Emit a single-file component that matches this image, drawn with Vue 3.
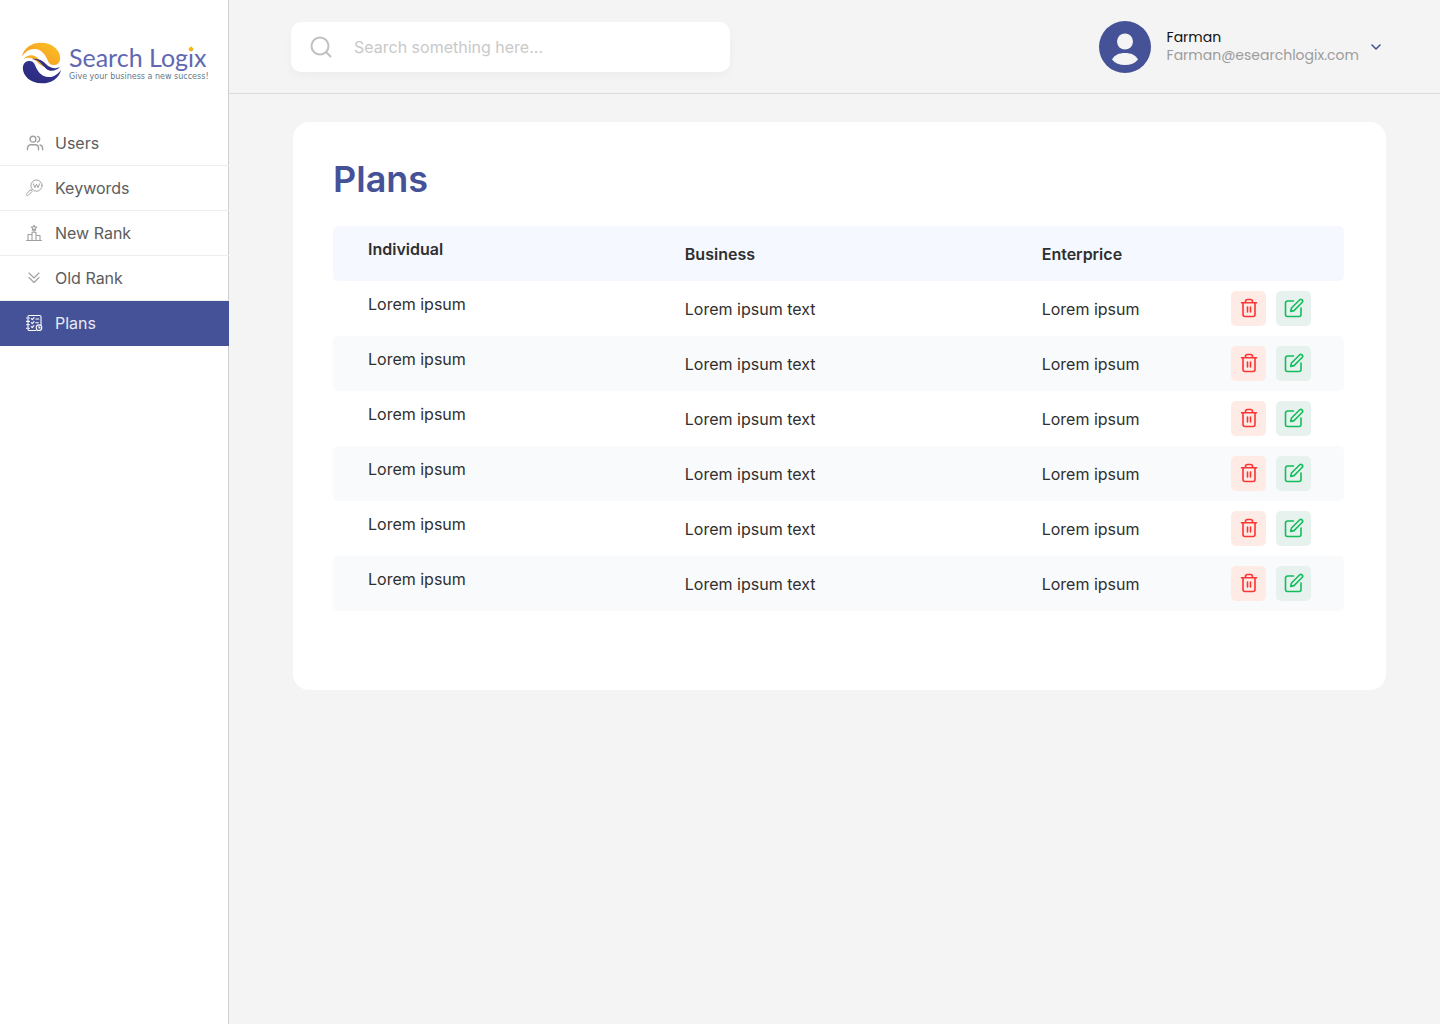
<script setup>
import { ref } from 'vue'

const query = ref('')
const active = ref('Plans')
const links = ['Users', 'Keywords', 'New Rank', 'Old Rank', 'Plans']
const plans = Array.from({ length: 6 }, (_, id) => ({
  id,
  individual: 'Lorem ipsum',
  business: 'Lorem ipsum text',
  enterprise: 'Lorem ipsum',
}))
</script>

<template>
  <div class="app">
    <aside class="sidebar">
      <a class="brand" href="#">
        <svg class="mark" viewBox="0 0 122 126" aria-hidden="true">
          <defs>
            <linearGradient id="gold" x1="0" y1="1" x2="1" y2="0">
              <stop offset="0" stop-color="#f39325" />
              <stop offset="1" stop-color="#fcc323" />
            </linearGradient>
            <linearGradient id="navy" x1="0" y1="1" x2="1" y2="0">
              <stop offset="0" stop-color="#3a3a9c" />
              <stop offset="1" stop-color="#28287a" />
            </linearGradient>
          </defs>
          <g fill="url(#gold)">
            <path d="M2 43C9 16 32 2 60 2c34 0 57 22 57 45 0 13-7 21-17 22-10 1-14-2-18-9C74 42 66 24 42 21 24 19 11 31 2 43Z" />
            <path d="M5 52c12-13 30-17 42-6 15 13 20 27 43 29-19 3-32-4-43-16C35 47 22 44 5 52Z" />
          </g>
          <g fill="url(#navy)" transform="rotate(180 61 63)">
            <path d="M2 43C9 16 32 2 60 2c34 0 57 22 57 45 0 13-7 21-17 22-10 1-14-2-18-9C74 42 66 24 42 21 24 19 11 31 2 43Z" />
            <path d="M5 52c12-13 30-17 42-6 15 13 20 27 43 29-19 3-32-4-43-16C35 47 22 44 5 52Z" />
          </g>
        </svg>
        <span class="wordmark">
          <span class="name">Search Log<span class="dotted">i</span>x</span>
          <span class="tagline">Give your business a new success!</span>
        </span>
      </a>

      <nav class="nav">
        <a
          v-for="link in links"
          :key="link"
          href="#"
          class="nav-link"
          :class="{ active: link === active }"
          @click.prevent="active = link"
        >
          <svg class="nav-icon" viewBox="0 0 18 18" aria-hidden="true">
            <g v-if="link === 'Users'" stroke-width="1.4">
              <circle cx="7" cy="5.2" r="2.9" />
              <path d="M1.5 15.8v-1.6a3.4 3.4 0 0 1 3.4-3.4h4.2a3.4 3.4 0 0 1 3.4 3.4v1.6M11.6 2.4a2.9 2.9 0 0 1 0 5.6M14 10.9a3.4 3.4 0 0 1 2.6 3.3v1.6" />
            </g>
            <g v-else-if="link === 'Keywords'" stroke-width="1">
              <circle cx="10.5" cy="6.6" r="5.6" />
              <path d="m7.4 4.8 1.6 3.8 1.5-3.4L12 8.6l1.6-3.800M6.300 10.400l-.9.9M4.700 10.900l1.500 1.500-4 4a1 1 0 0 1-1.500-1.500z" />
            </g>
            <g v-else-if="link === 'New Rank'" stroke-width="1.1">
              <path d="M.5 16.500h15M2 16.500v-6h4M6 16.500V8.300h4v8.200M10 11.500h4v5M8 8.300V6.500M8 1.200l.8 1.700 1.900.2-1.400 1.300.4 1.900-1.700-.9-1.700.9.4-1.900-1.400-1.300 1.900-.2z" />
            </g>
            <g v-else-if="link === 'Old Rank'" stroke-width="1.1">
              <path d="m3 4 5 5 5-5M3 8.500l5 5 5-5" />
            </g>
            <g v-else stroke-width="1.1">
              <path d="M10 16.500H3.300A1.300 1.300 0 0 1 2 15.200M2 2.800a1.300 1.300 0 0 1 1.300-1.300h10.400A1.300 1.300 0 0 1 15 2.800v7.700M.5 4h3M.5 7.400h3M.5 10.800h3M.5 14.200h3M2 5v1.500M2 8.400v1.500M2 11.800v1.500M5.300 4.600l1 1 1.700-2M5.300 8.600l1 1 1.700-2M5.300 12.700l1 1 1.500-2M9.800 5h3M9.800 8.800h2.500" />
              <circle cx="13" cy="13.7" r="2.8" />
              <path d="M13 12.2v1.7h1.2" />
            </g>
          </svg>
          {{ link }}
        </a>
      </nav>
    </aside>

    <div class="main">
      <header class="topbar">
        <label class="search">
          <svg class="search-icon" viewBox="0 0 22 22" aria-hidden="true">
            <circle cx="10" cy="10" r="8.5" />
            <path d="m16 16 4.5 4.5" />
          </svg>
          <input v-model="query" type="search" placeholder="Search something here..." aria-label="Search" />
        </label>

        <button class="account" type="button">
          <svg class="avatar" viewBox="0 0 52 52" aria-hidden="true">
            <circle cx="26" cy="26" r="26" fill="#465298" />
            <circle cx="26" cy="20.5" r="8" fill="#f4f4f4" />
            <path d="M13 38.5C15.5 34 20 32 26 32s10.5 2 13 6.5C36 42.3 31.5 44 26 44s-10-1.7-13-5.5Z" fill="#f4f4f4" />
          </svg>
          <span class="identity">
            <span class="user">Farman</span>
            <span class="email">Farman@esearchlogix.com</span>
          </span>
          <svg class="chevron" viewBox="0 0 10 8" aria-hidden="true"><path d="m1 2 4 4 4-4" /></svg>
        </button>
      </header>

      <main class="card">
        <h1>Plans</h1>
        <table>
          <colgroup>
            <col class="col-individual" />
            <col class="col-business" />
            <col class="col-enterprise" />
            <col />
          </colgroup>
          <thead>
            <tr>
              <th scope="col">Individual</th>
              <th scope="col">Business</th>
              <th scope="col">Enterprice</th>
              <td></td>
            </tr>
          </thead>
          <tbody>
            <tr v-for="plan in plans" :key="plan.id">
              <td>{{ plan.individual }}</td>
              <td>{{ plan.business }}</td>
              <td>{{ plan.enterprise }}</td>
              <td>
                <div class="actions">
                  <button class="action delete" type="button" aria-label="Delete plan">
                    <svg viewBox="0 0 21 21" aria-hidden="true">
                      <path d="M3.500 4.700h15M5 4.700v11.800a2 2 0 0 0 2 2h8a2 2 0 0 0 2-2V4.700M7.500 4.700V3.500a2 2 0 0 1 2-2h3a2 2 0 0 1 2 2v1.200M9.500 9v5M12.500 9v5" />
                    </svg>
                  </button>
                  <button class="action edit" type="button" aria-label="Edit plan">
                    <svg viewBox="0 0 21 21" aria-hidden="true">
                      <path d="M10.5 3h-6a2 2 0 0 0-2 2v11.5a2 2 0 0 0 2 2H16a2 2 0 0 0 2-2V10M16.5 2a1.7 1.7 0 0 1 2.6 2.500L11 12.600l-3.300.8.8-3.400z" />
                    </svg>
                  </button>
                </div>
              </td>
            </tr>
          </tbody>
        </table>
      </main>
    </div>
  </div>
</template>

<style>
body {
  margin: 0;
  background: #f4f4f4;
}
</style>

<style scoped>
.app {
  display: flex;
  min-height: 100vh;
  background: #f4f4f4;
  color: #2f2f2f;
  font-family: Inter, "Liberation Sans", sans-serif;
  font-size: 16px;
}

.app * {
  box-sizing: border-box;
}

a {
  color: inherit;
  text-decoration: none;
}

button {
  padding: 0;
  border: 0;
  background: none;
  color: inherit;
  font: inherit;
  text-align: left;
  cursor: pointer;
}

svg {
  display: block;
  flex: none;
  fill: none;
  stroke-linecap: round;
  stroke-linejoin: round;
}

.sidebar {
  flex: none;
  width: 229px;
  background: linear-gradient(#cfcfcf, #cfcfcf) right / 1px 100% no-repeat #fff;
}

.brand {
  display: flex;
  gap: 7px;
  height: 121px;
  padding: 42px 0 0 21px;
}

.mark {
  width: 41px;
  height: 42px;
}

.wordmark {
  display: flex;
  flex-direction: column;
  white-space: nowrap;
}

.name {
  color: #6068b2;
  font-family: Lato, "Open Sans", sans-serif;
  font-size: 25px;
  line-height: 30px;
}

.dotted {
  position: relative;
}

.dotted::before {
  position: absolute;
  top: 5px;
  left: 50%;
  width: 4px;
  height: 4px;
  margin-left: -2px;
  background: #fbb416;
  content: "";
  transform: rotate(45deg);
}

.tagline {
  color: #62798a;
  font-family: "DejaVu Sans", "Open Sans", sans-serif;
  font-size: 8px;
  line-height: 10px;
}

.nav-link {
  display: flex;
  align-items: center;
  gap: 11px;
  height: 45px;
  padding-left: 26px;
  border-bottom: 1px solid #ececec;
  color: #5c5c5c;
}

.nav-link.active {
  border-color: #465298;
  background: #465298;
  color: #e8eaf4;
}

.nav-icon {
  width: 18px;
  height: 18px;
  stroke: #a0a0a0;
}

.active .nav-icon {
  stroke: #fff;
}

.main {
  flex: 1;
  min-width: 0;
}

.topbar {
  display: flex;
  align-items: center;
  justify-content: space-between;
  height: 94px;
  padding: 0 59px 0 62px;
  border-bottom: 1px solid #dcdcdc;
}

.search {
  display: flex;
  align-items: center;
  gap: 22px;
  width: 439px;
  height: 50px;
  padding: 0 19px;
  border-radius: 10px;
  background: #fff;
  box-shadow: 0 4px 10px rgba(0, 0, 0, 0.03);
}

.search-icon {
  width: 22px;
  height: 22px;
  stroke: #c0c0c0;
  stroke-width: 2;
}

.search input {
  flex: 1;
  min-width: 0;
  padding: 0;
  border: 0;
  outline: 0;
  background: none;
  color: #2f2f2f;
  font: inherit;
}

.search input::placeholder {
  color: #c9c9c9;
  opacity: 1;
}

.account {
  display: flex;
  align-items: center;
  gap: 12px;
}

.avatar {
  width: 52px;
  height: 52px;
  margin-right: 4px;
}

.identity {
  display: flex;
  flex-direction: column;
  padding-bottom: 2px;
  font-family: Poppins, Inter, sans-serif;
  font-size: 14px;
  line-height: 18px;
}

.user {
  color: #111;
}

.email {
  color: #9c9c9c;
}

.chevron {
  width: 10px;
  height: 8px;
  stroke: #465298;
  stroke-width: 1.6;
}

.card {
  margin: 28px 54px 28px 64px;
  padding: 33px 42px 79px 40px;
  border-radius: 16px;
  background: #fff;
}

h1 {
  margin: 0 0 23px;
  color: #465298;
  font-size: 36px;
  font-weight: 600;
  line-height: 48px;
}

table {
  width: 100%;
  border-spacing: 0;
  table-layout: fixed;
}

.col-individual {
  width: 34.8%;
}

.col-business {
  width: 35.3%;
}

.col-enterprise {
  width: 18.7%;
}

th,
td {
  height: 55px;
  padding: 0;
  text-align: left;
  line-height: 20px;
  vertical-align: middle;
}

th {
  font-weight: 600;
}

th:first-child,
td:first-child {
  padding: 0 0 10px 35px;
  border-radius: 5px 0 0 5px;
}

td:last-child {
  border-radius: 0 5px 5px 0;
}

thead th,
thead td {
  background: #f5f8ff;
}

tbody tr:nth-child(even) td {
  background: #f9fafc;
}

.actions {
  display: flex;
  gap: 10px;
}

.action {
  display: grid;
  place-items: center;
  width: 35px;
  height: 35px;
  border-radius: 5px;
}

.action svg {
  width: 21px;
  height: 21px;
  stroke-width: 1.6;
}

.delete {
  background: #feebe5;
}

.delete svg {
  stroke: #fb3434;
}

.edit {
  background: #e7f2ee;
}

.edit svg {
  stroke: #12bd5b;
}
</style>
